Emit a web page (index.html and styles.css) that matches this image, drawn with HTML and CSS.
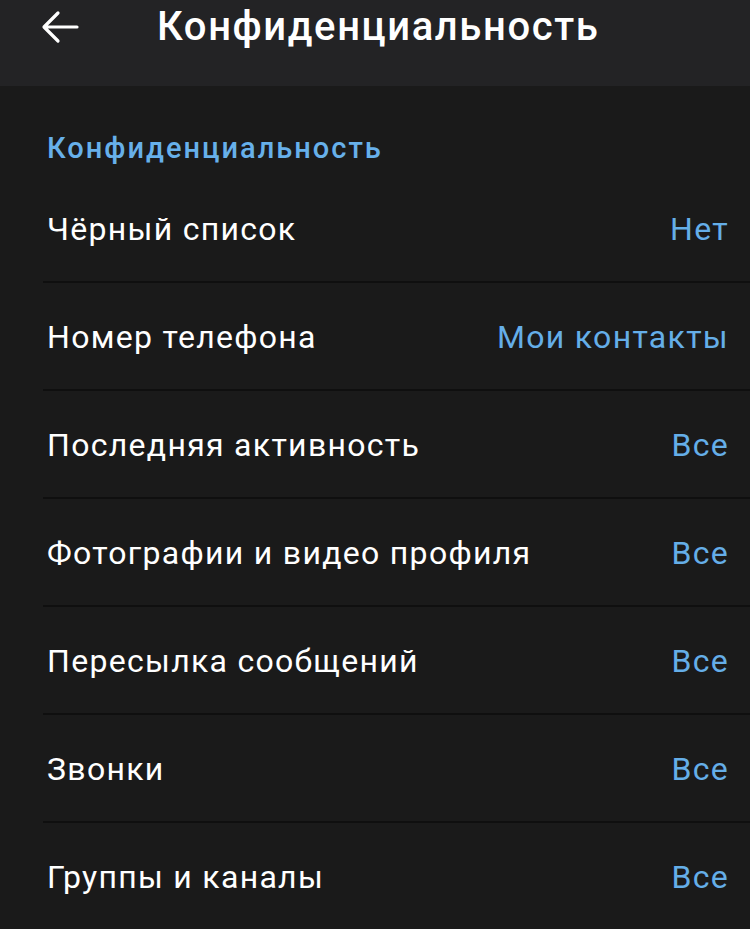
FILE: index.html
```html
<!DOCTYPE html>
<html lang="ru">
<head>
<meta charset="utf-8">
<title>Конфиденциальность</title>
<link rel="stylesheet" href="styles.css">
</head>
<body>
<header class="appbar">
  <div class="appbar-row">
    <span class="back" aria-label="Назад">
      <svg width="38" height="34" viewBox="0 0 38 34"><path d="M36 17H4M17 3L3 17l14 14" fill="none" stroke="#fff" stroke-width="3.2" stroke-linecap="round" stroke-linejoin="round"/></svg>
    </span>
    <h1 class="title">Конфиденциальность</h1>
  </div>
</header>
<main class="content">
  <h2 class="section-title">Конфиденциальность</h2>
  <ul class="list">
    <li class="row"><span class="label">Чёрный список</span><span class="value">Нет</span></li>
    <li class="row"><span class="label">Номер телефона</span><span class="value">Мои контакты</span></li>
    <li class="row"><span class="label">Последняя активность</span><span class="value">Все</span></li>
    <li class="row"><span class="label">Фотографии и видео профиля</span><span class="value">Все</span></li>
    <li class="row"><span class="label">Пересылка сообщений</span><span class="value">Все</span></li>
    <li class="row"><span class="label">Звонки</span><span class="value">Все</span></li>
    <li class="row"><span class="label">Группы и каналы</span><span class="value">Все</span></li>
  </ul>
</main>
</body>
</html>
```
FILE: styles.css
```css
html, body {
  margin: 0;
  padding: 0;
  background: #1a1a1a;
  font-family: Roboto, "Noto Sans", "Liberation Sans", sans-serif;
  color: #ffffff;
  overflow: hidden;
}
.appbar {
  height: 86px;
  background: #232325;
}
.appbar-row {
  height: 54px;
  display: flex;
  align-items: center;
}
.back {
  display: flex;
  margin-left: 41px;
  width: 116px;
}
.title {
  margin: 0;
  font-size: 40px;
  font-weight: 500;
  letter-spacing: 1.6px;
  line-height: 54px;
  color: #ffffff;
}
.content {
  padding-top: 45px;
}
.section-title {
  margin: 0 0 10px 47px;
  font-size: 29px;
  font-weight: 500;
  letter-spacing: 2px;
  line-height: 34px;
  color: #67b0ea;
}
.list {
  list-style: none;
  margin: 0;
  padding: 0;
}
.row {
  margin-left: 43px;
  padding: 2px 21px 0 4px;
  height: 104px;
  display: flex;
  align-items: center;
  justify-content: space-between;
  border-bottom: 2px solid #0f0f0f;
  font-size: 32px;
  letter-spacing: 1.3px;
}
.label {
  color: #ffffff;
}
.value {
  color: #65aee8;
}
```
